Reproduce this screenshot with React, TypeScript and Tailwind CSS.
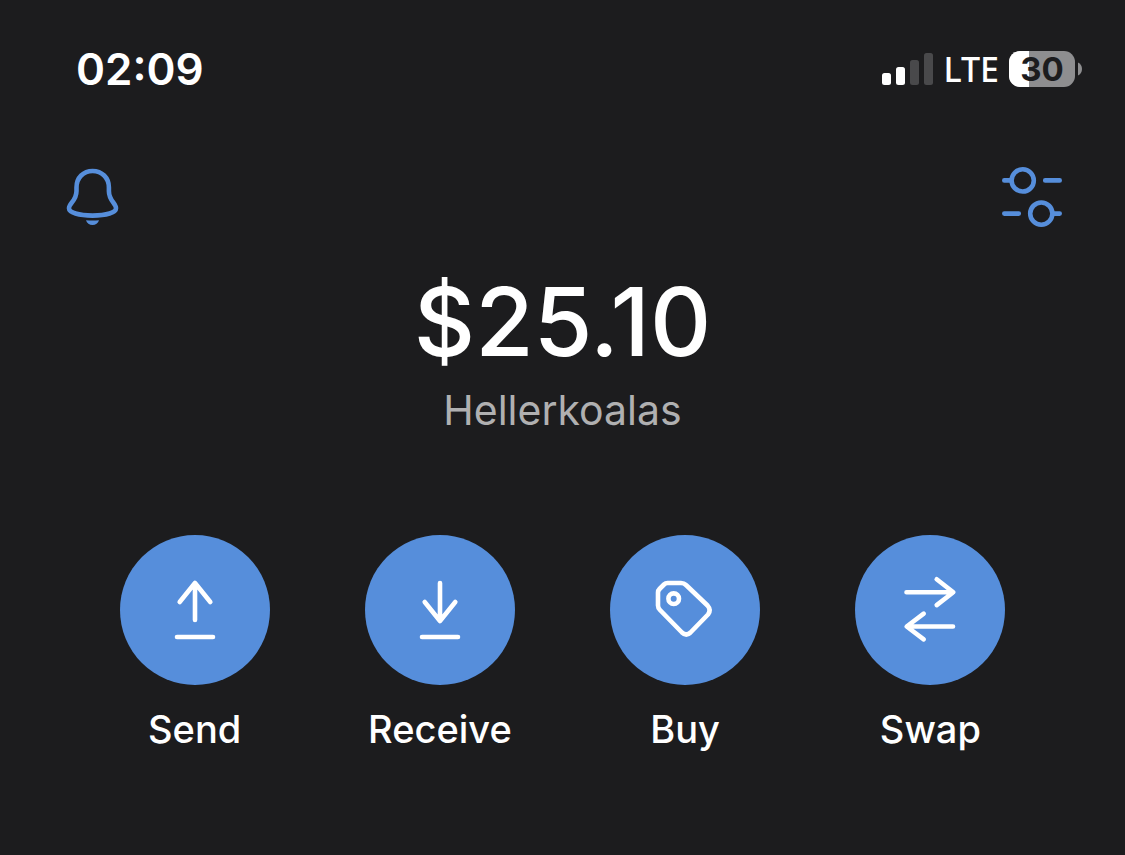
import type { ReactNode } from "react";

function SignalBars() {
  return (
    <svg width="51" height="32" viewBox="0 0 51 32" role="img" aria-label="Signal: 2 of 4 bars">
      <rect x="0" y="20" width="9" height="12" rx="2.5" fill="#fff" />
      <rect x="14" y="14" width="9" height="18" rx="2.5" fill="#fff" />
      <rect x="28" y="7" width="9" height="25" rx="2.5" fill="#49494b" />
      <rect x="42" y="0" width="9" height="32" rx="2.5" fill="#49494b" />
    </svg>
  );
}

function Battery({ level }: { level: number }) {
  return (
    <div className="flex items-center gap-[3px]">
      <div className="relative flex h-9 w-[66px] items-center justify-center rounded-[11px] bg-[#8e8e90]">
        <div className="absolute inset-y-0 left-0 rounded-l-[11px] bg-white" style={{ width: `${level}%` }} />
        <span className="relative text-[33px] leading-10 font-bold text-[#1c1c1e]">{level}</span>
      </div>
      <svg width="4" height="14" viewBox="0 0 4 14" aria-hidden="true">
        <path d="M0 0.5C2.4 1.6 4 4 4 7S2.4 12.4 0 13.5Z" fill="#8e8e90" />
      </svg>
    </div>
  );
}

function BellIcon() {
  return (
    <svg width="58" height="62" viewBox="0 0 58 62" fill="none" aria-hidden="true">
      <path
        d="M12.5 21.5C12.5 11.5 19.5 5 28.6 5S44.9 11.5 44.9 21.5V25C44.9 35 52 37 52 42.3C52 46.6 42.5 49.6 28.6 49.6S5 46.6 5 42.3C5 37 12.5 35 12.5 25Z"
        stroke="#568edb"
        strokeWidth="4.6"
        strokeLinejoin="round"
      />
      <path d="M22 54.2Q28.6 55 35 54.2C34.2 57.2 31.5 59 28.5 59S22.8 57.2 22 54.2Z" fill="#568edb" />
    </svg>
  );
}

function SlidersIcon() {
  return (
    <svg
      width="60"
      height="60"
      viewBox="0 0 60 60"
      fill="none"
      stroke="#568edb"
      strokeWidth="4.6"
      strokeLinecap="round"
      aria-hidden="true"
    >
      <circle cx="20.7" cy="13.4" r="11.1" />
      <path d="M2.3 13.4H9M43.2 13.4H57.7" />
      <circle cx="39.3" cy="46.6" r="11.1" />
      <path d="M2.3 46.6H16.8M51 46.6H57.7" />
    </svg>
  );
}

function ActionButton({ label, children }: { label: string; children: ReactNode }) {
  return (
    <button type="button" className="flex cursor-pointer flex-col items-center gap-5">
      <span className="flex size-[150px] items-center justify-center rounded-full bg-[#568edb]">
        <svg
          width="150"
          height="150"
          viewBox="0 0 150 150"
          fill="none"
          stroke="#fff"
          strokeWidth="4.6"
          strokeLinecap="round"
          strokeLinejoin="round"
          aria-hidden="true"
        >
          {children}
        </svg>
      </span>
      <span className="text-[38px] leading-12 font-medium">{label}</span>
    </button>
  );
}

export default function App() {
  return (
    <div className="min-h-screen bg-[#1c1c1e] font-['Inter',sans-serif] text-white">
      <header className="flex items-center justify-between pt-[42px] pr-[43px] pl-[76px]">
        <time className="text-[44px] leading-[54px] font-semibold">02:09</time>
        <div className="flex items-center gap-2.5">
          <SignalBars />
          <span className="font-['Noto_Sans',sans-serif] text-[34px] leading-9 font-medium">LTE</span>
          <Battery level={30} />
        </div>
      </header>

      <nav className="flex items-center justify-between pt-[70px] pr-[63px] pl-16">
        <button type="button" aria-label="Notifications" className="cursor-pointer">
          <BellIcon />
        </button>
        <button type="button" aria-label="Manage wallet" className="cursor-pointer">
          <SlidersIcon />
        </button>
      </nav>

      <main>
        <section className="flex flex-col items-center pt-9 text-center">
          <h1 className="text-[95px] leading-[116px] font-medium">$25.10</h1>
          <p className="text-[41px] leading-[60px] font-normal text-[#b0b0b1]">Hellerkoalas</p>
        </section>

        <section className="grid grid-cols-4 px-[72px] pt-[95px] pb-20">
          <ActionButton label="Send">
            <path d="M75 48V85M59.7 67L75 48L90.3 67M57 102H93" />
          </ActionButton>
          <ActionButton label="Receive">
            <path d="M75 48V86M59.7 67L75 86L90.3 67M57 102H93" />
          </ActionButton>
          <ActionButton label="Buy">
            <path d="M57.5 48H71Q74 48 76 50L97.5 70.5Q101.5 75 98 79.5L80.5 97.5Q76.3 101.5 72 97.5L50 75Q48 73 48 70.5V57.5Q48 55.5 49.5 54L54 49.5Q55.5 48 57.5 48Z" />
            <circle cx="63.7" cy="63.7" r="5.3" />
          </ActionButton>
          <ActionButton label="Swap">
            <path d="M51.5 57.2H98M81.7 44.3L98.3 57.2L81.7 70.1M98 91.5H52M68.7 78.6L51.7 91.5L68.7 104.4" />
          </ActionButton>
        </section>
      </main>
    </div>
  );
}
